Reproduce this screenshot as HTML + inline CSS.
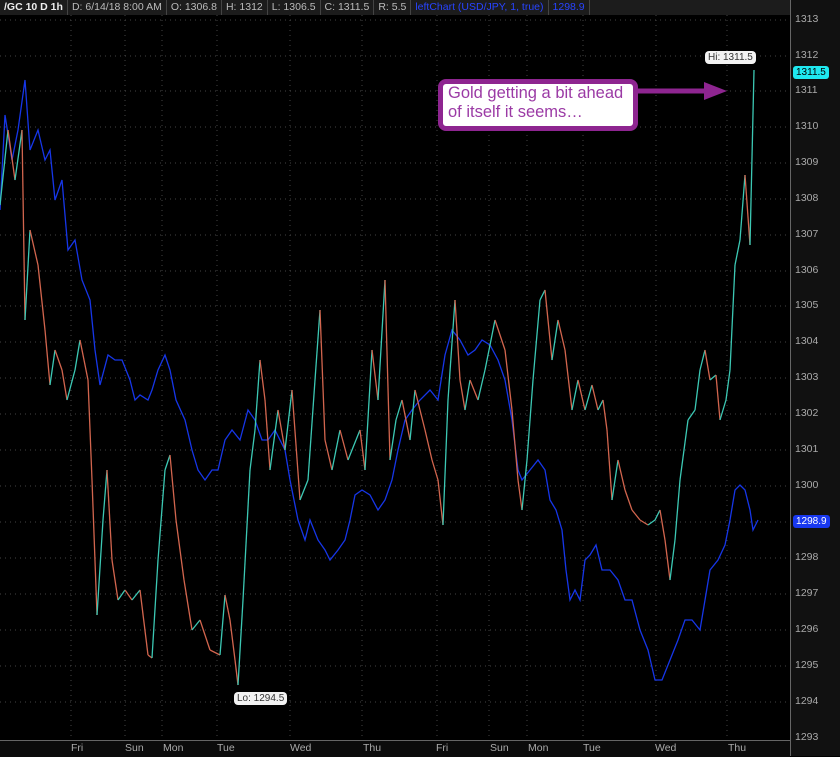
<!DOCTYPE html>
<html><head><meta charset="utf-8"><style>
body{margin:0;width:840px;height:756px;background:#000;overflow:hidden;font-family:"Liberation Sans",sans-serif;position:relative}
#top{position:absolute;left:0;top:0;height:15px;width:790px;background:#1c1c1c;display:flex;font-size:10.5px;color:#bbb;line-height:15px}
#top div{padding:0 4px;border-right:1px solid #444;white-space:nowrap}
#rax{position:absolute;left:790px;top:0;width:50px;height:756px;background:#111;border-left:1px solid #666}
.p{position:absolute;left:795px;font-size:10.5px;color:#aaa}
.d{position:absolute;top:742px;font-size:10.5px;color:#aaa}
#bax{position:absolute;left:0;top:740px;width:790px;height:16px;background:#0b0b0b;border-top:1px solid #666}
.tag{position:absolute;font-size:10px;border-radius:3px;padding:0 3px;line-height:13px}
#call{position:absolute;left:438px;top:79px;width:185px;height:42px;background:#fff;border:5px solid #8e2590;border-radius:8px;color:#9b3aa5;font-size:16.5px;line-height:19px;padding:0 0 0 5px;box-sizing:content-box}
</style></head><body>
<svg width="840" height="756" style="position:absolute;left:0;top:0" id="sv">
<g stroke="#444" stroke-dasharray="1,4" stroke-width="1">
<line x1="0" x2="790" y1="20" y2="20"/><line x1="0" x2="790" y1="56" y2="56"/><line x1="0" x2="790" y1="91" y2="91"/><line x1="0" x2="790" y1="127" y2="127"/><line x1="0" x2="790" y1="163" y2="163"/><line x1="0" x2="790" y1="199" y2="199"/><line x1="0" x2="790" y1="235" y2="235"/><line x1="0" x2="790" y1="271" y2="271"/><line x1="0" x2="790" y1="306" y2="306"/><line x1="0" x2="790" y1="342" y2="342"/><line x1="0" x2="790" y1="378" y2="378"/><line x1="0" x2="790" y1="414" y2="414"/><line x1="0" x2="790" y1="450" y2="450"/><line x1="0" x2="790" y1="486" y2="486"/><line x1="0" x2="790" y1="522" y2="522"/><line x1="0" x2="790" y1="558" y2="558"/><line x1="0" x2="790" y1="594" y2="594"/><line x1="0" x2="790" y1="630" y2="630"/><line x1="0" x2="790" y1="666" y2="666"/><line x1="0" x2="790" y1="702" y2="702"/>
<line y1="15" y2="740" x1="71" x2="71"/><line y1="15" y2="740" x1="125" x2="125"/><line y1="15" y2="740" x1="162" x2="162"/><line y1="15" y2="740" x1="217" x2="217"/><line y1="15" y2="740" x1="290" x2="290"/><line y1="15" y2="740" x1="362" x2="362"/><line y1="15" y2="740" x1="437" x2="437"/><line y1="15" y2="740" x1="489" x2="489"/><line y1="15" y2="740" x1="527" x2="527"/><line y1="15" y2="740" x1="583" x2="583"/><line y1="15" y2="740" x1="656" x2="656"/><line y1="15" y2="740" x1="727" x2="727"/>
</g>
<polyline fill="none" stroke="#1636e8" stroke-width="1.3" points="0,210 5,115 12,160 18,130 25,80 30,150 38,130 45,160 50,150 55,200 62,180 68,250 75,240 82,280 90,300 95,350 100,385 108,355 115,360 122,360 130,380 135,400 140,395 148,400 152,390 158,370 165,355 170,370 176,400 185,420 192,450 198,470 205,480 212,470 218,470 225,440 232,430 240,440 248,410 255,420 262,440 268,440 275,430 285,450 290,480 298,520 305,540 310,520 318,540 325,550 330,560 338,550 345,540 350,520 355,495 362,490 370,495 378,510 385,500 392,480 398,450 405,420 412,410 420,400 430,390 438,400 445,355 452,330 460,340 468,355 475,350 482,340 490,345 498,360 505,380 512,420 518,470 522,480 530,470 538,460 545,470 550,500 556,510 562,530 566,570 570,600 575,590 580,600 585,560 590,555 596,545 602,570 610,570 618,580 625,600 632,600 640,630 648,650 655,680 662,680 670,660 678,640 685,620 692,620 700,630 705,600 710,570 718,560 725,545 730,520 735,490 740,485 745,490 750,510 753,530 758,520"/>
<g id="gold" fill="none" stroke-width="1.3"></g>
<polyline fill="none" stroke="#8e2590" stroke-width="5" points="633,91 708,91"/>
<polygon fill="#8e2590" points="704,82 727,91 704,100"/>
</svg>
<div id="top"><div style="font-weight:bold;color:#eee">/GC 10 D 1h</div><div>D: 6/14/18 8:00 AM</div><div>O: 1306.8</div><div>H: 1312</div><div>L: 1306.5</div><div>C: 1311.5</div><div>R: 5.5</div><div style="color:#2844ff">leftChart (USD/JPY, 1, true)</div><div style="color:#2844ff">1298.9</div></div>
<div id="rax"></div>
<div id="bax"></div>
<div class="p" style="top:13px">1313</div><div class="p" style="top:49px">1312</div><div class="p" style="top:84px">1311</div><div class="p" style="top:120px">1310</div><div class="p" style="top:156px">1309</div><div class="p" style="top:192px">1308</div><div class="p" style="top:228px">1307</div><div class="p" style="top:264px">1306</div><div class="p" style="top:299px">1305</div><div class="p" style="top:335px">1304</div><div class="p" style="top:371px">1303</div><div class="p" style="top:407px">1302</div><div class="p" style="top:443px">1301</div><div class="p" style="top:479px">1300</div><div class="p" style="top:551px">1298</div><div class="p" style="top:587px">1297</div><div class="p" style="top:623px">1296</div><div class="p" style="top:659px">1295</div><div class="p" style="top:695px">1294</div><div class="p" style="top:731px">1293</div>
<div class="tag" style="left:793px;top:66px;background:#1fe8f0;color:#000">1311.5</div>
<div class="tag" style="left:793px;top:515px;background:#1838f0;color:#fff">1298.9</div>
<div class="tag" style="left:705px;top:51px;background:#f2f2f2;color:#333;border-radius:4px">Hi: 1311.5</div>
<div class="tag" style="left:234px;top:692px;background:#f2f2f2;color:#333;border-radius:4px">Lo: 1294.5</div>
<div class="d" style="left:71px">Fri</div><div class="d" style="left:125px">Sun</div><div class="d" style="left:163px">Mon</div><div class="d" style="left:217px">Tue</div><div class="d" style="left:290px">Wed</div><div class="d" style="left:363px">Thu</div><div class="d" style="left:436px">Fri</div><div class="d" style="left:490px">Sun</div><div class="d" style="left:528px">Mon</div><div class="d" style="left:583px">Tue</div><div class="d" style="left:655px">Wed</div><div class="d" style="left:728px">Thu</div>
<div id="call">Gold getting a bit ahead<br>of itself it seems…</div>
<script>
var pts=[[0,205],[8,130],[15,180],[22,130],[25,320],[30,230],[38,265],[45,330],[50,385],[55,350],[62,370],[67,400],[75,370],[80,340],[88,380],[92,480],[97,615],[103,520],[107,470],[112,560],[118,600],[125,590],[132,600],[140,590],[148,655],[152,658],[158,560],[165,470],[170,455],[176,520],[184,580],[192,630],[200,620],[210,650],[220,655],[225,595],[230,620],[235,660],[238,685],[243,600],[250,470],[255,430],[260,360],[265,400],[270,470],[278,410],[285,450],[292,390],[300,500],[308,480],[315,380],[320,310],[325,440],[332,470],[340,430],[348,460],[356,440],[360,430],[365,470],[372,350],[378,400],[385,280],[390,460],[396,420],[402,400],[410,440],[415,390],[420,410],[425,430],[432,460],[438,480],[443,525],[448,400],[455,300],[460,380],[465,410],[470,380],[478,400],[485,370],[495,320],[505,350],[512,410],[518,480],[522,510],[527,460],[533,380],[540,300],[545,290],[552,360],[558,320],[565,350],[572,410],[578,380],[585,410],[592,385],[598,410],[603,400],[607,430],[612,500],[618,460],[625,490],[632,510],[640,520],[648,525],[655,520],[660,510],[665,540],[670,580],[675,540],[680,480],[688,420],[695,410],[700,370],[705,350],[710,380],[716,375],[720,420],[726,400],[730,370],[735,265],[740,240],[745,175],[750,245],[754,70]];
var g=document.getElementById('gold'),s='';
for(var i=1;i<pts.length;i++){var a=pts[i-1],b=pts[i];s+='<line x1="'+a[0]+'" y1="'+a[1]+'" x2="'+b[0]+'" y2="'+b[1]+'" stroke="'+(b[1]<=a[1]?'#3cc8b4':'#d2654e')+'"/>';}
g.innerHTML=s;
</script>
</body></html>
